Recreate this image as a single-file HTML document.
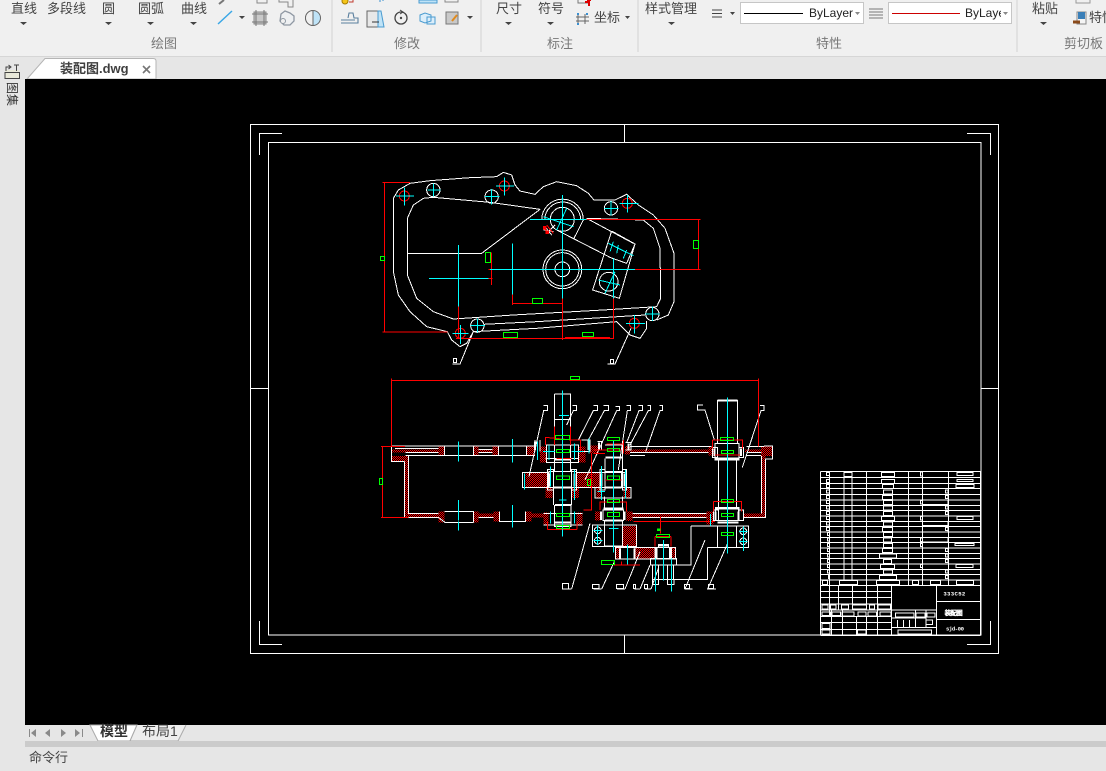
<!DOCTYPE html>
<html lang="zh"><head><meta charset="utf-8"><title>装配图.dwg</title>
<style>
html,body{margin:0;padding:0}
body{width:1106px;height:771px;overflow:hidden;position:relative;background:#e6e6e6;font-family:"Liberation Sans","Noto Sans CJK SC",sans-serif;font-size:13px;color:#444}
.a{position:absolute;white-space:nowrap;line-height:16px}
.g{color:#777}
.c{position:absolute;background:#fff;border:1px solid #c6c6c6;height:20px;width:122px;top:2px;overflow:hidden;font-size:12px;color:#222;line-height:20px}
svg{position:absolute;left:0;top:0;display:block}
</style></head><body>
<div style="position:absolute;left:0;top:0;width:1106px;height:56px;background:#f0f0f0;border-bottom:1px solid #d6d6d6"></div>
<div class="a" style="left:11px;top:1px">直线</div>
<div class="a" style="left:47px;top:1px">多段线</div>
<div class="a" style="left:102px;top:1px">圆</div>
<div class="a" style="left:138px;top:1px">圆弧</div>
<div class="a" style="left:181px;top:1px">曲线</div>
<div class="a" style="left:496px;top:1px">尺寸</div>
<div class="a" style="left:538px;top:1px">符号</div>
<div class="a" style="left:594px;top:10px">坐标</div>
<div class="a" style="left:645px;top:1px">样式管理</div>
<div class="a" style="left:1032px;top:1px">粘贴</div>
<div class="a" style="left:1089px;top:10px">特性</div>
<div class="a g" style="left:151px;top:36px">绘图</div>
<div class="a g" style="left:394px;top:36px">修改</div>
<div class="a g" style="left:547px;top:36px">标注</div>
<div class="a g" style="left:816px;top:36px">特性</div>
<div class="a g" style="left:1064px;top:36px">剪切板</div>
<div class="c" style="left:740px"><span style="position:absolute;left:68px">ByLayer</span></div>
<div class="c" style="left:888px"><span style="position:absolute;left:76px;width:36px;overflow:hidden">ByLayer</span></div>

<svg width="1106" height="57" viewBox="0 0 1106 57" fill="none">
<path d="M332 0V52M481 0V52M638 0V52M1017 0V52" stroke="#d2d2d2"/>
<path fill="#444" d="M20 22h7l-3.500 3zM105 22h7l-3.500 3zM147 22h7l-3.500 3zM190 22h7l-3.500 3zM505 22h7l-3.500 3zM547 22h7l-3.500 3zM668 22h7l-3.500 3zM1040 22h7l-3.500 3zM239 16h6l-3 3zM467 16h6l-3 3zM625 16h5l-2.500 3zM730 12h5l-2.500 3z"/>
<path fill="#888" d="M855 12h5l-2.500 3zM1003 12h5l-2.500 3z"/>
<path d="M218 24L232 11" stroke="#3aa7e6" stroke-width="1.500"/>
<path d="M254 12H266V24H254Z" fill="#c9c9c9" stroke="#888"/><path d="M252 14H268M252 22H268M256 10V26M264 10V26" stroke="#777"/>
<path d="M281 14L285 11L290 13L294 16V21L290 25H284L280 21Z" stroke="#8f98a3" stroke-width="1.300" fill="#eef0f2"/><circle cx="283" cy="21" r="2.500" stroke="#8f98a3" fill="#f0f0f0"/>
<circle cx="313" cy="18" r="7.500" stroke="#666" fill="#bfe3f7"/><path d="M313 18V10.500A7.500 7.500 0 0 0 305.500 18A7.500 7.500 0 0 0 313 25.500Z" fill="#f0f0f0" stroke="#666"/>
<path d="M257 0V3H267V0M279 0V2H288V7H293V0" stroke="#888"/><path d="M219 4L224 0" stroke="#777" stroke-width="2"/>
<circle cx="345" cy="1" r="3" fill="#f5c518" stroke="#a57c00"/><path d="M349 2H353V0" stroke="#c0392b"/>
<path d="M341 20H355M341 23H358V18H354L353 13H349L348 18" stroke="#5a7f9e" stroke-width="1.100"/>
<path d="M367 11H378V27H367Z" fill="#e8e8e8" stroke="#666"/><path d="M378 11H381L384 27H378Z" fill="#bfe3f7" stroke="#4a9bd0"/><path d="M372 22H379" stroke="#333"/>
<circle cx="401" cy="18" r="6" stroke="#444" stroke-width="1.300"/><circle cx="401" cy="18" r="1.200" fill="#444"/><path d="M400 10L403 12L400 14" stroke="#444"/>
<path d="M420 15L425 13L431 15V21L425 23L420 21Z M427 17L435 17V24H427Z" stroke="#4a9bd0" fill="#dceefa"/>
<path d="M446 12H458V24H446Z" fill="#c9c9c9" stroke="#777"/><path d="M452 21L457 15" stroke="#e08a1e" stroke-width="2"/>
<path d="M419 0V3H437V0Z" stroke="#4a9bd0" fill="#bfe3f7"/><path d="M445 0V2H458V0" stroke="#888"/><path d="M380 0V2M383 0V1" stroke="#3a8fd0"/>
<path d="M578 0V3H588" stroke="#777"/><path d="M585 2H589V6M587 0H591" stroke="#d00" stroke-width="2"/>
<path d="M578 14V24M585 14V24M576 17H589M576 21H589" stroke="#666"/><rect x="577" y="13" width="2" height="2" fill="#3a8fd0"/><rect x="586" y="13" width="2" height="2" fill="#3a8fd0"/><rect x="577" y="23" width="2" height="2" fill="#3a8fd0"/>
<path d="M712 10H722M712 13.500H722M712 17H722" stroke="#444"/>
<path d="M869 9H883M869 12H883M869 15H883M869 18H883" stroke="#777"/>
<path d="M744 13.500H803" stroke="#000"/><path d="M892 13.500H960" stroke="#c00"/>
<path d="M1076 0V3H1090V0" stroke="#999"/><path d="M1077 12H1086V24H1077Z" stroke="#888" fill="#f5f5f5"/><rect x="1078" y="12" width="7" height="7" fill="#3a7fb8"/><path d="M1073 22H1080" stroke="#8a4a1a" stroke-width="3"/>
</svg>

<svg width="1106" height="771" viewBox="0 0 1106 771" fill="none">
<path d="M27 79L45 58.500H153Q156 58.500 156 61V79Z" fill="#fff" stroke="#b5b5b5"/>
<rect x="5" y="70" width="14" height="9" fill="#e8e8d8"/><path d="M6 71V67H10M8.500 65L11 67L8.500 69M14 65H19M16.500 65V71M5 72.500H19.500V78.500H5Z" stroke="#444"/>
<rect x="25" y="79" width="1081" height="646" fill="#000"/>
<path d="M90 725L98 741H130L137 725Z" fill="#fff" stroke="#aaa"/><path d="M137 725L130 741H178L186 725" fill="#eee" stroke="#aaa"/>
<rect x="25" y="741" width="1081" height="6" fill="#cbcbcb"/>
<path fill="#8a8a8a" d="M29 729h1v8h-1zM36 729v8l-5-4zM50 729v8l-5-4zM61 729v8l5-4zM75 729v8l5-4zM82 729h1v8h-1z"/>
<path d="M143 66L150 73M150 66L143 73" stroke="#777" stroke-width="1.600"/>
<defs><pattern id="h" width="6" height="6" patternUnits="userSpaceOnUse"><rect width="6" height="6" fill="#f00"/><rect width="3" height="3" fill="#000"/><rect x="3" y="3" width="3" height="3" fill="#000"/></pattern></defs>

<g shape-rendering="crispEdges" stroke="#fff">
<path d="M250.500 124.500H998.500V653.500H250.500ZM268.500 142.500H981V635H268.500ZM624.500 124V142M624.500 635V653M250 388.500H268M981 388.500H998M259.500 155V133.500H282M967 133.500H990.500V155M259.500 621V644.500H282M967 644.500H990.500V621"/>
</g>

<!-- plan view -->
<g transform="translate(370,165) scale(.33333)" stroke-width="3" stroke="#fff" shape-rendering="crispEdges">
<path d="M232 500L245 525L270 545L290 535L310 500L500 490L740 470L780 510L810 520L830 490L830 468M860 465L895 450L912 410V265L885 190L850 150L805 120L770 88L735 105H672L655 85L620 62L560 50L520 65L495 88L450 78L435 60L425 30L400 22L380 35L300 38L180 47L120 55L85 75L70 100V320L85 390L120 440L170 485L232 500"/>
<path d="M112 265V160L130 120L160 100L190 97L360 112L510 133M650 160L820 165L850 190L870 250L872 400L860 425L700 435L430 450L250 462L190 440L140 400L112 330V265H335L510 133"/>
<path d="M515 165A62 62 0 0 1 640 165M524 165A53 53 0 0 1 632 165"/>
<path d="M340 478L500 470L825 450"/>
<path d="M650 160L790 235M725 198L795 237L770 295L722 278L560 195M725 198L668 375L748 400L795 237M640 165L612 220"/>
<path d="M310 500L270 597H248M783 490L735 597H712M250 580H260V593H250ZM721 583H731V596H721Z"/>
<circle cx="190" cy="75" r="20"/><circle cx="365" cy="95" r="20"/><circle cx="723" cy="130" r="20"/><circle cx="322" cy="482" r="20"/><circle cx="847" cy="447" r="20"/>
<circle cx="577" cy="313" r="58"/><circle cx="577" cy="313" r="50"/><circle cx="577" cy="313" r="22"/>
<circle cx="577" cy="163" r="36"/><circle cx="716" cy="350" r="28"/>
<path d="M525 185L545 210M530 205L555 180M520 195L550 200"/>
<g stroke="#f00"><circle cx="103" cy="93" r="15"/><circle cx="403" cy="63" r="15"/><circle cx="772" cy="115" r="15"/><circle cx="271" cy="505" r="15"/><circle cx="793" cy="475" r="15"/>
<path d="M37 52H120M43 52V501M37 501H232M650 163H992M986 163V313M795 313H992M265 425V520M258 520H730V400M578 400V525M427 388V420M427 415H578M585 517H720M364 262V360M356 313H370M356 340H368M530 180L550 205M520 187L535 205" /></g>
<g stroke="#0ff"><path d="M78 93H132M103 68V122M172 75H212M190 55V95M345 95H388M365 72V118M378 63H432M403 38V92M748 115H805M772 90V143M703 130H745M723 108V152M302 482H345M322 460V502M248 505H295M271 480V537M768 475H825M793 450V505M825 447H868M847 425V468M577 90V400M480 163H650M265 240V425M177 340H355M427 235V388M360 313H795M731 280V400M520 155L610 185M590 130L560 195M715 235L790 272M730 230L720 260M745 240L740 265M770 255L760 280M685 345L750 360M735 320L705 385"/></g>
<g stroke="#0f0"><rect x="31" y="274" width="12" height="12"/><rect x="346" y="262" width="15" height="30"/><rect x="970" y="226" width="15" height="24"/><rect x="487" y="400" width="30" height="15"/><rect x="400" y="502" width="42" height="15"/><rect x="637" y="502" width="33" height="12"/></g>
<path d="M520 184h8v8h-8zM528 198h8v8h-8z" fill="#f00" stroke="#f00"/>
</g>

<!-- section view -->
<g transform="translate(375,370) scale(.33333)" stroke-width="3" stroke="#fff" shape-rendering="crispEdges">
<g fill="url(#h)" stroke="none">
<rect x="50" y="238" width="140" height="10"/><rect x="50" y="258" width="50" height="16"/><rect x="88" y="258" width="12" height="184"/><rect x="100" y="431" width="90" height="11"/>
<rect x="190" y="227" width="18" height="30"/><rect x="295" y="227" width="15" height="30"/><rect x="310" y="238" width="42" height="9"/><rect x="352" y="227" width="18" height="30"/><rect x="455" y="227" width="25" height="30"/>
<rect x="190" y="425" width="18" height="32"/><rect x="295" y="425" width="15" height="32"/><rect x="310" y="431" width="45" height="11"/><rect x="355" y="425" width="18" height="30"/><rect x="452" y="425" width="18" height="30"/><rect x="470" y="431" width="35" height="11"/>
<rect x="452" y="308" width="68" height="44"/><rect x="603" y="308" width="72" height="44"/><rect x="512" y="354" width="20" height="30"/><rect x="590" y="354" width="22" height="30"/><rect x="745" y="354" width="20" height="28"/><rect x="664" y="354" width="16" height="28"/>
<rect x="495" y="230" width="20" height="48"/><rect x="612" y="230" width="20" height="48"/><rect x="640" y="226" width="30" height="25"/><rect x="750" y="228" width="15" height="26"/>
<rect x="765" y="238" width="235" height="9"/><rect x="1000" y="230" width="15" height="26"/><rect x="1110" y="238" width="50" height="8"/><rect x="1158" y="228" width="34" height="30"/><rect x="1160" y="258" width="12" height="184"/><rect x="1105" y="431" width="55" height="11"/><rect x="770" y="431" width="225" height="11"/><rect x="995" y="425" width="20" height="38"/><rect x="755" y="425" width="18" height="28"/><rect x="660" y="425" width="16" height="26"/>
<rect x="742" y="468" width="42" height="62"/><rect x="782" y="533" width="60" height="32"/><rect x="722" y="533" width="15" height="32"/><rect x="885" y="533" width="18" height="32"/><rect x="604" y="428" width="18" height="36"/><rect x="505" y="428" width="15" height="36"/>
</g>
<path d="M50 228H480M60 236H190M92 247H190M92 257H480M50 228V274H88M100 257V430H190M88 274V442H190M208 227V257H295V227M370 227V257H455V227M150 442H190L210 457H295M208 425H295V457M310 442H355M373 425V455H452V425M310 247H352M310 238H352"/>
<path d="M765 229H1010M765 247H1000M765 257H810M1115 229H1160L1192 228V267H1172V442H1105M1160 258V431M1115 247H1160M1115 257H1158M773 431H995M773 442H995"/>
<path d="M538 72H587V265M538 72V270M538 148H587M538 270V305M587 270V305M536 305V405M590 305V405M538 405V470H588V405M512 265H610M505 430H622M505 465H622M522 305H605V352H522ZM442 308H520V352H442ZM604 308H755V352H604ZM518 298H535V360H518ZM590 298H605V360H590ZM515 225H610V278H515Z"/>
<path d="M690 225H742V265M690 265V305H742V265M688 380V420H742V380M690 305H740V352H690ZM684 420H746V452H684ZM660 352H768V384H660ZM675 298H690V360H675ZM742 298H755V360H742ZM688 452H742V528H688Z"/>
<path d="M1028 92H1088V220H1028ZM1020 220H1092V270H1020ZM1030 270V412M1085 270V412M1022 412H1092V452H1022ZM1012 232H1028V262H1012ZM1092 232H1105V262H1092ZM1015 420H1030V452H1015ZM1090 420H1105V452H1090ZM1028 468H1120V532H1028ZM1028 468H1085V532H1028Z"/>
<path d="M652 465H784V530H652ZM722 533H902V567H722ZM735 533H780V567H735ZM840 533H890V567H840ZM850 523H880V533H850ZM827 565H905V585H827ZM832 585V628H895V585M832 628H850V644H832ZM878 628H897V644H878ZM850 585V628M878 585V628"/>
<path stroke-width="6" d="M540 268H588M536 352H590M540 405H588M538 458H588M692 262H742M692 352H740M686 415H746M690 452H742M1022 265H1090M1028 92H1088M1022 415H1092M1028 458H1090M850 527H880M480 215V240M640 212V240M672 218V240M760 220V238M678 425V450M748 425V450M1018 235V258M1098 235V258M1022 425V450M1090 425V450M735 535V565M778 535V565M845 533V567M885 533V567M525 310V350M598 310V350M680 310V350M748 310V350"/>
<path d="M948 468H1028M948 468V585H895M998 532H1028M998 532V628H895M480 210V245M495 210V245M620 210H645V245H620M668 215H680V240H668M752 218H768V240H752M984 105H968V120H990L1018 210M1155 107H1167V122H1158L1102 292M505 107H517V122H506L462 320M592 107H604V122H595L575 165M655 107H667V122H655L610 210M685 107H700V122H688L640 210M722 110H733V122H725L630 330M755 107H767V122H757L730 300M790 107H802V122H792L755 218M817 107H827V122H820L765 225M853 107H862V122H855L812 245M563 640H580V657H563ZM590 657H565M590 657L645 460M653 643H672V656H653ZM680 657H655M680 657L718 575M725 643H745V656H725ZM750 657H726M750 657L795 545M775 643H782V656H775ZM795 657H778M795 657L825 585M808 643H818V656H808ZM828 657H810M828 657L850 595M928 643H943V656H928ZM953 657H930L990 510M1000 643H1015V656H1000ZM1023 657H998L1058 520"/>
<circle cx="668" cy="481" r="10"/><circle cx="668" cy="512" r="10"/><circle cx="1105" cy="484" r="10"/><circle cx="1105" cy="514" r="10"/>
<g stroke="#f00"><path d="M49 25V230M49 31H1150M1150 25V230M18 229H90M22 229V442M18 442H100M511 225V202L590 210H617V240M538 170V225M587 170V225M518 478V455M606 478V455M518 478H606M655 240H740M650 250V420H625M695 222H745M745 210V250M655 250H690M675 395V420M755 395V425M675 396H755M1013 210H1102V235M1013 210V235M1015 395H1100V425M1015 395V425M856 440V490M775 455H1020M840 500V530M888 500V530M840 500H888M740 585H795M716 585H740V575M1020 255H1095M690 330H740M545 265H590"/></g>
<g stroke="#0ff"><path d="M250 215V275M412 207V278M250 390V452M412 405V473M250 455V482M562 62V500M488 215V270M522 225V270M598 220V270M642 205V250M504 245H540M590 245H625M716 210V548M1057 82V550M526 290V350M598 300V390M448 310V358M680 288V390M752 300V385M526 425V460M598 425V460M690 365H668M668 465V525M655 481H682M655 512H682M1105 470V543M1092 484H1118M1092 514H1118M757 523V583M865 510V632M841 565V665M889 565V665M702 475H730M552 137H582M552 390H575M1006 432V468"/></g>
<g stroke="#0f0"><rect x="586" y="19" width="28" height="10"/><rect x="14" y="325" width="8" height="18"/><rect x="541" y="196" width="42" height="12"/><rect x="544" y="238" width="40" height="10"/><rect x="544" y="318" width="40" height="10"/><rect x="544" y="430" width="40" height="10"/><rect x="544" y="466" width="40" height="10"/><rect x="697" y="202" width="37" height="10"/><rect x="697" y="235" width="37" height="10"/><rect x="697" y="318" width="37" height="10"/><rect x="697" y="388" width="37" height="10"/><rect x="697" y="428" width="37" height="12"/><rect x="1036" y="202" width="39" height="10"/><rect x="1039" y="241" width="37" height="10"/><rect x="1039" y="388" width="37" height="10"/><rect x="1039" y="430" width="37" height="10"/><rect x="1039" y="487" width="37" height="10"/><rect x="844" y="493" width="40" height="10"/><rect x="679" y="571" width="40" height="12"/><rect x="637" y="328" width="10" height="18"/></g>
<path d="M847 477h8v5h-8z" fill="#0f0" stroke="#0f0"/>
</g>

<!-- title block -->
<g transform="translate(810,460) scale(.33333)" stroke-width="3" stroke="#fff" shape-rendering="crispEdges">
<path d="M32 35H512M32 53H512M32 70H512M32 86H512M32 103H512M32 120H512M32 136H512M32 152H512M32 168H512M32 184H512M32 200H512M32 216H512M32 232H512M32 248H512M32 264H512M32 280H512M32 296H512M32 312H512M32 328H512M32 344H512M32 360H512M32 376H512"/>
<path d="M32 35V527M58 35V376M102 35V360M126 35V360M170 35V376M296 35V376M338 35V376M416 35V376M512 35V527"/>
<path d="M102 38H126V50H102ZM214 38H254V50H214ZM214 58H254V70H214ZM218 74H250V86H218ZM220 90H248V102H220ZM217 107H248V119H217ZM220 122H248V134H220ZM220 138H248V150H220ZM220 154H248V166H220ZM214 170H254V182H214ZM220 186H248V198H220ZM217 202H248V214H217ZM220 218H248V230H220ZM220 234H245V246H220ZM220 250H248V262H220ZM218 266H248V278H218ZM208 282H260V294H208ZM220 298H245V310H220ZM212 314H254V326H212ZM220 330H248V342H220ZM208 346H260V358H208Z"/>
<path d="M49 38H58V47H49ZM49 58H58V67H49ZM49 74H58V83H49ZM49 90H58V99H49ZM49 107H58V116H49ZM49 122H58V131H49ZM49 138H58V147H49ZM49 154H58V163H49ZM49 170H58V179H49ZM49 186H58V195H49ZM49 202H58V211H49ZM52 218H58V227H52ZM52 234H58V243H52ZM52 250H58V259H52ZM52 266H58V275H52ZM52 282H58V291H52ZM52 298H58V307H52ZM52 314H58V323H52ZM52 330H58V339H52ZM55 346H58V355H55Z"/>
<path d="M441 38H489V47H441ZM441 58H489V65H441ZM438 74H492V83H438ZM441 170H489V179H441ZM435 250H492V257H435ZM438 314H489V323H438ZM338 120H414V134H338ZM338 184H414V196H338ZM338 200H414V216H338ZM338 232H414V246H338ZM406 90H414V99H406ZM406 107H414V116H406ZM406 138H414V147H406ZM406 154H414V163H406ZM406 202H414V211H406ZM406 266H414V275H406ZM406 282H414V291H406ZM406 298H414V307H406ZM406 330H414V339H406ZM406 346H414V355H406ZM332 36H338V48H332ZM332 122H338V132H332ZM332 170H338V180H332ZM332 234H338V244H332ZM332 250H338V260H332ZM332 314H338V323H332Z"/>
<path d="M38 362H52V374H38ZM88 362H142V374H88ZM200 362H268V374H200ZM308 362H326V374H308ZM362 362H392V374H362ZM440 362H490V374H440Z"/>
<path d="M32 394H245M32 412H245M32 432H245M32 450H245M32 470H245M32 488H245M32 508H245M32 527H512M58 376V470M86 376V450M128 376V450M170 376V450M202 376V527M64 450V527M98 450V527M140 470V527M170 470V527M245 376V527M245 450H380M245 474H348M245 502H380M380 376V527M380 424H512M380 478H512M348 450V502M316 450V502"/>
<path d="M36 435H54V447H36ZM62 435H78V447H62ZM94 435H116V447H94ZM128 435H170V447H128ZM178 435H194V447H178ZM204 435H242V447H204ZM36 456H62V466H36ZM66 456H92V466H66ZM96 456H132V468H96ZM144 456H168V468H144ZM174 456H200V468H174ZM210 456H243V468H210ZM36 491H60V505H36ZM36 510H60V522H36ZM142 510H168V522H142ZM256 459H312V471H256ZM318 459H345V471H318ZM351 459H375V471H351ZM348 480H368V494H348ZM264 510H365V522H264ZM262 480V502M280 480V502M298 480V502"/>
<text x="400" y="407" fill="#fff" stroke="none" font-size="17" font-family="'Liberation Mono',monospace" font-weight="700" textLength="66">333C52</text>
<text x="404" y="465" fill="#fff" stroke="#fff" stroke-width="1" font-size="19" font-family="'Noto Sans CJK SC',sans-serif" font-weight="700" textLength="54">装配图</text>
<text x="408" y="512" fill="#fff" stroke="none" font-size="17" font-family="'Liberation Mono',monospace" font-weight="700" textLength="54">sjd-00</text>
</g>
</svg>

<div class="a" style="left:60px;top:61px;font-weight:700;color:#3f3f3f;font-size:13px">装配图.dwg</div>
<div class="a" style="left:6px;top:80px;font-size:12px;color:#333;transform:rotate(90deg)">图</div>
<div class="a" style="left:6px;top:92px;font-size:12px;color:#333;transform:rotate(90deg)">集</div>
<div class="a" style="left:100px;top:723px;font-size:14px;font-weight:700;color:#333;line-height:17px">模型</div>
<div class="a" style="left:142px;top:723px;font-size:14px;color:#444;line-height:17px">布局1</div>
<div class="a" style="left:29px;top:750px;font-size:13px;color:#444">命令行</div>
</body></html>
